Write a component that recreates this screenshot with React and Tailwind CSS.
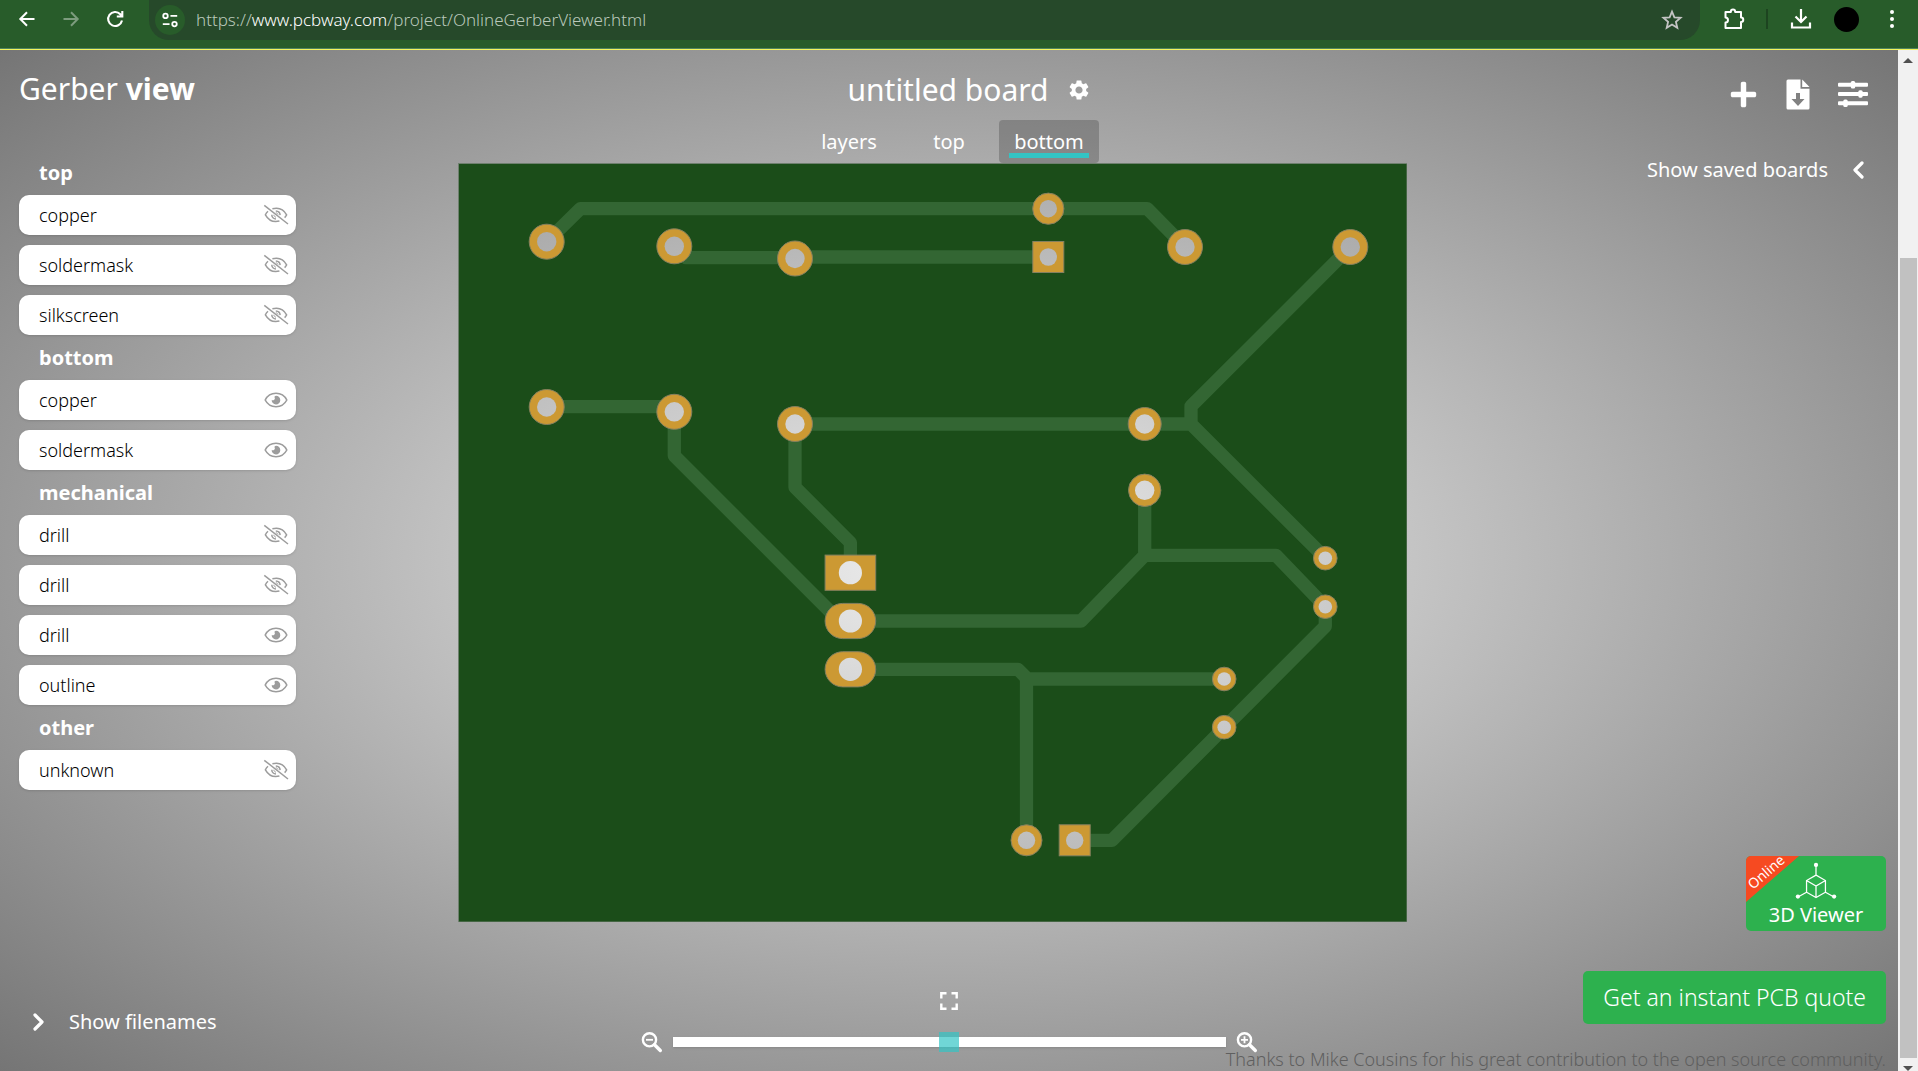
import React, { useState } from "react";
import { MdSettings } from "react-icons/md";
import { FaPlus } from "react-icons/fa";

const LAYER_GROUPS = [
  { title: "top", layers: [["copper", false], ["soldermask", false], ["silkscreen", false]] },
  { title: "bottom", layers: [["copper", true], ["soldermask", true]] },
  { title: "mechanical", layers: [["drill", false], ["drill", false], ["drill", true], ["outline", true]] },
  { title: "other", layers: [["unknown", false]] },
];

function EyeIcon() {
  return (
    <svg viewBox="0 0 26 22" className="h-[22px] w-[26px]" fill="none" aria-hidden="true">
      <path d="M2.2 11C4.6 6.3 8.6 4.3 13 4.3S21.400 6.300 23.800 11C21.400 15.700 17.400 17.700 13 17.700S4.600 15.700 2.200 11Z" stroke="#9c9c9c" strokeWidth="1.600" />
      <path d="M13 6.800a4.300 4.300 0 1 1-4.300 4.100c.7.600 1.700.6 2.300.1 1-.7 1.100-1.700.5-2.700-.2-.5.700-1.500 1.500-1.500Z" fill="#9c9c9c" />
    </svg>
  );
}

function EyeOffIcon() {
  return (
    <svg viewBox="0 0 26 22" className="h-[22px] w-[26px]" fill="none" stroke="#9c9c9c" aria-hidden="true">
      <path d="M1.300 1.300 25 20" strokeWidth="1.500" />
      <path d="M9.400 4.700C15.500 3.200 20.700 5.300 23.600 10.800c-.5 1-1.200 2-2 2.800" strokeWidth="1.500" />
      <path d="M5 7.300c-1.100 1-2 2.200-2.600 3.500 3.200 5.700 8 7.700 14 6.300" strokeWidth="1.500" />
      <path d="M12.800 6.900c2.300.1 4.200 1.900 4.300 4.200M8.800 10.800c0 2.300 1.900 4.200 4.200 4.300" strokeWidth="1.500" />
      <path d="M12.800 8.700c1 .1 1.900.9 2.200 1.900M10.800 10.800c.1 1.100 1 2.200 2.200 2.400" strokeWidth="1" />
    </svg>
  );
}

function Chevron({ className }) {
  return (
    <svg viewBox="0 0 12 20" className={className} fill="none" stroke="white" strokeWidth="3.200" strokeLinecap="round" strokeLinejoin="round" aria-hidden="true">
      <path d="M10 3 3 10l7 7" />
    </svg>
  );
}

function MagnifierIcon({ plus }) {
  return (
    <svg viewBox="0 0 22 22" className="size-[22px]" fill="none" stroke="white" aria-hidden="true">
      <circle cx="8.500" cy="8.800" r="6.600" strokeWidth="2.400" />
      <path d="M13.500 13.800 19.300 19.500" strokeWidth="3.400" strokeLinecap="round" />
      <path d={plus ? "M5 8.800h7M8.500 5.300v7" : "M5 8.800h7"} strokeWidth="1.800" />
    </svg>
  );
}

function AddressBar() {
  return (
    <header className="flex h-12 items-start bg-[#285c2a] text-white">
      <nav className="flex h-[38px] w-[149px] shrink-0 items-center gap-5 pl-[15px]" aria-label="Browser">
        <button aria-label="Back" className="flex size-6 items-center justify-center">
          <svg viewBox="0 0 20 20" className="size-5" fill="none" stroke="currentColor" strokeWidth="2"><path d="M17.500 10H4M10 3.300 3.300 10l6.700 6.700" /></svg>
        </button>
        <button aria-label="Forward" className="flex size-6 items-center justify-center text-[#7d9c7e]">
          <svg viewBox="0 0 20 20" className="size-5" fill="none" stroke="currentColor" strokeWidth="2"><path d="M2.500 10H16M10 3.300l6.700 6.700-6.700 6.700" /></svg>
        </button>
        <button aria-label="Reload" className="flex size-6 items-center justify-center">
          <svg viewBox="0 0 20 20" className="size-5" fill="none" stroke="currentColor" strokeWidth="2.100"><path d="M17 11.500A7 7 0 1 1 15.300 5.200L17 7M17.300 2v5.500h-5.500" /></svg>
        </button>
      </nav>
      <div className="flex h-10 min-w-0 flex-1 items-center rounded-b-[20px] bg-[#26492a] pr-4 pl-[6px]">
        <button aria-label="Site information" className="flex size-[30px] shrink-0 items-center justify-center rounded-full bg-[#285c2a]">
          <svg viewBox="0 0 20 20" className="size-[18px]" fill="none" stroke="currentColor" strokeWidth="2"><circle cx="5" cy="5.500" r="2.500" /><path d="M10.500 5.500H18M2 14.500h7.500" /><circle cx="15" cy="14.500" r="2.500" /></svg>
        </button>
        <a href="https://www.pcbway.com/project/OnlineGerberViewer.html" className="ml-[11px] flex-1 truncate text-[17px] leading-6 font-light text-[#b9c8ba]">
          https://<span className="font-[350] text-white">www.pcbway.com</span>/project/OnlineGerberViewer.html
        </a>
        <button aria-label="Bookmark this page" className="text-[#c4c4c4]">
          <svg viewBox="0 0 24 24" className="size-6" fill="none" stroke="currentColor" strokeWidth="1.800"><path d="m12 3.600 2.400 5.700 6.200.5-4.700 4 1.400 6-5.300-3.200-5.300 3.200 1.400-6-4.700-4 6.200-.5Z" /></svg>
        </button>
      </div>
      <div className="flex h-[38px] shrink-0 items-center pr-5 pl-[22px]">
        <button aria-label="Extensions">
          <svg viewBox="0 0 24 24" className="size-6" fill="none" stroke="currentColor" strokeWidth="2" strokeLinejoin="round"><path d="M3.500 5h5.300c0-3.200 4.400-3.200 4.400 0H19v5.500c3 0 3 4.500 0 4.500v6H3.500v-5.500c3.300 0 3.300-5 0-5Z" /></svg>
        </button>
        <span className="ml-5 h-5 w-[2px] bg-[#1d4420]" />
        <button aria-label="Downloads" className="ml-[21px]">
          <svg viewBox="0 0 24 24" className="size-6" fill="none" stroke="currentColor" strokeWidth="2.200"><path d="M12 2v12.500M6.500 9.500l5.500 5.500 5.500-5.500M3 15.500v5h18v-5" /></svg>
        </button>
        <button aria-label="Profile" className="ml-[21px] size-[25px] rounded-full bg-black" />
        <button aria-label="Browser menu" className="ml-[27px]">
          <svg viewBox="0 0 12 20" className="h-5 w-3" fill="currentColor"><circle cx="6" cy="3" r="2" /><circle cx="6" cy="10" r="2" /><circle cx="6" cy="17" r="2" /></svg>
        </button>
      </div>
    </header>
  );
}

const TRACES = [
  "M546.700 241.700 580.300 208.700H1147.300L1185 247",
  "M674.300 246.300 686 257.700H795M795 257H1048",
  "M546.700 406.700H670L674.300 411.800V455.700L839.600 621H850.400",
  "M850.400 572.700V542.600L795 487.300V424H1191V406.300L1350.300 247M1191 424 1325.300 558",
  "M1144.700 490.300V555.300H1276L1325.300 606.700V626.300L1112 840.300H1074.700M1144.700 555.300 1081 621H850.400",
  "M850.400 669.300H1018L1027.500 679H1224M1026.500 679V840.300",
];

const ROUND_PADS = [
  [546.7, 241.7, 17.5, 9.7], [674.3, 246.3, 17.5, 9.7], [795, 258.5, 17.5, 9.7], [1048.3, 208.7, 15.6, 8.7],
  [1185, 247, 17.5, 9.7], [1350.3, 247, 17.5, 9.7], [546.7, 407, 17.5, 9.7], [674.3, 411.8, 17.5, 9.7],
  [795, 424, 17.5, 9.7], [1144.7, 424, 16.5, 9.7], [1144.7, 490.3, 16.2, 9.7], [1325.3, 558.2, 11.8, 6.8],
  [1325.3, 606.7, 11.8, 6.8], [1224.2, 679, 11.8, 6.8], [1224.2, 727.2, 11.8, 6.8], [1026.5, 840.3, 15.5, 8.7],
];

const BOX_PADS = [
  [1048.3, 257, 31, 31, 0, 8.7], [1074.7, 840.3, 31, 31, 0, 8.7], [850.4, 572.7, 50.600, 35.200, 0, 11.6],
  [850.4, 621, 50.600, 35.200, 17.600, 11.6], [850.4, 669.3, 50.600, 35.200, 17.600, 11.6],
];

function Board() {
  return (
    <svg viewBox="458 163 949 759" className="block h-auto w-1/2 shrink-0" role="img" aria-label="Bottom side of the board">
      <defs>
        <mask id="drills" maskUnits="userSpaceOnUse" x="458" y="163" width="949" height="759">
          <rect x="458" y="163" width="949" height="759" fill="white" />
          {ROUND_PADS.map(([x, y, , h], i) => <circle key={i} cx={x} cy={y} r={h} fill="black" />)}
          {BOX_PADS.map(([x, y, , , , h], i) => <circle key={i} cx={x} cy={y} r={h} fill="black" />)}
        </mask>
      </defs>
      <g mask="url(#drills)">
        <rect x="458" y="163" width="949" height="759" fill="#6f806f" />
        <rect x="459" y="164" width="947.500" height="757.500" fill="#1b4d19" />
        <g fill="none" stroke="#336633" strokeWidth="13.300" strokeLinecap="round" strokeLinejoin="round">
          {TRACES.map((d) => <path key={d} d={d} />)}
        </g>
        <g fill="#cc9933" stroke="#85805f" strokeWidth="1">
          {ROUND_PADS.map(([x, y, r], i) => <circle key={i} cx={x} cy={y} r={r} />)}
          {BOX_PADS.map(([x, y, w, h, r], i) => <rect key={i} x={x - w / 2} y={y - h / 2} width={w} height={h} rx={r} />)}
        </g>
      </g>
    </svg>
  );
}

function Toolbar({ view, onView }) {
  return (
    <div className="grid grid-cols-[1fr_auto_1fr] items-start">
      <h1 className="pt-[19px] pl-[19px] text-3xl leading-10 font-normal">Gerber <b>view</b></h1>
      <div className="flex flex-col items-center">
        <div className="flex h-[70px] items-center gap-[18px] pt-[10px] pl-10">
          <h2 className="text-3xl leading-10">untitled board</h2>
          <button aria-label="Board settings"><MdSettings className="size-6" /></button>
        </div>
        <nav className="flex" aria-label="Board view">
          {["layers", "top", "bottom"].map((name) => (
            <button
              key={name}
              onClick={() => onView(name)}
              className={name === view
                ? "flex h-[43px] w-[100px] flex-col items-center rounded-[4px] bg-black/20 px-[10px] pt-[10px] text-xl leading-[23px]"
                : "flex h-[43px] w-[100px] flex-col items-center px-[10px] pt-[10px] text-xl leading-[23px]"}
            >
              {name}
              {name === view && <span className="h-[5px] w-full bg-[#33c4c4]" />}
            </button>
          ))}
        </nav>
      </div>
      <div className="flex h-[88px] items-center justify-end gap-7 pr-[30px]">
        <button aria-label="Add board"><FaPlus className="size-[29px]" /></button>
        <button aria-label="Download files">
          <svg viewBox="0 0 24 31" className="h-[31px] w-6" fill="white">
            <path fillRule="evenodd" d="M2 .5h12.500v9.300H23.500V29a1.500 1.500 0 0 1-1.500 1.500H2A1.500 1.500 0 0 1 .5 29V2A1.500 1.500 0 0 1 2 .5ZM10 14v6H5.500l6.500 7 6.500-7H14v-6Z" />
            <path d="M16.200.5 23.500 8h-7.300Z" />
          </svg>
        </button>
        <button aria-label="Render settings">
          <svg viewBox="0 0 30 28" className="h-7 w-[30px]" fill="white">
            <rect y="2.700" width="30" height="4" rx="1" /><rect y="12" width="30" height="4" rx="1" /><rect y="21.300" width="30" height="4" rx="1" />
            <rect x="12.800" y="1" width="4.400" height="7.500" rx="1.600" /><rect x="20.300" y="10.200" width="4.400" height="7.500" rx="1.600" /><rect x="5.300" y="19.500" width="4.400" height="7.500" rx="1.600" />
          </svg>
        </button>
      </div>
    </div>
  );
}

function LayerList() {
  const [groups, setGroups] = useState(LAYER_GROUPS);
  const toggle = (gi, li) =>
    setGroups(groups.map((g, i) => i !== gi ? g : { ...g, layers: g.layers.map(([n, on], j) => [n, j === li ? !on : on]) }));
  return (
    <aside className="flex w-[458px] shrink-0 flex-col gap-[13px] pl-[19px]">
      {groups.map((group, gi) => (
        <section key={group.title}>
          <h3 className="h-8 pl-5 text-xl leading-5 font-bold">{group.title}</h3>
          <ul className="flex flex-col gap-[10px]">
            {group.layers.map(([name, visible], li) => (
              <li key={li} className="flex h-10 w-[277px] items-center justify-between rounded-[10px] bg-white pr-[7px] pl-5 text-lg font-[350] text-black shadow-sm">
                <span>{name}</span>
                <button aria-label={`Toggle ${group.title} ${name}`} onClick={() => toggle(gi, li)}>
                  {visible ? <EyeIcon /> : <EyeOffIcon />}
                </button>
              </li>
            ))}
          </ul>
        </section>
      ))}
    </aside>
  );
}

function SidePanel() {
  return (
    <div className="flex min-w-0 flex-1 flex-col items-end justify-between">
      <button className="flex h-[14px] items-center gap-6 pr-[34px] text-xl leading-[14px]">
        Show saved boards
        <Chevron className="h-5 w-3" />
      </button>
      <a href="#viewer-3d" className="relative mr-3 flex h-[75px] w-[140px] flex-col items-center rounded-[5px] bg-[#2db14e] pt-[6px] text-xl leading-8">
        <svg viewBox="0 0 42 38" className="h-[38px] w-[42px]" fill="none" stroke="white" strokeWidth="1.300" aria-hidden="true">
          <path d="M21 4v9.500l9.700 5.500v12L21 36.500 11.300 31V19L21 13.500M11.300 19 21 24.700 30.700 19M21 24.700v11.800M11.300 31 2.500 36M30.700 31l8.800 5" />
          <g fill="white" stroke="none"><circle cx="21" cy="3" r="2.200" /><circle cx="2.400" cy="35.500" r="2.200" /><circle cx="39.600" cy="35.500" r="2.200" /></g>
        </svg>
        3D Viewer
        <span className="absolute top-0 left-0 h-[46px] w-[53px] rounded-tl-[5px] bg-[#f64a21] [clip-path:polygon(0_0,100%_0,0_100%)]" />
        <span className="absolute top-1 left-[-6px] w-[52px] -rotate-[41deg] text-center text-sm leading-6">Online</span>
      </a>
    </div>
  );
}

function Footer() {
  const [zoom, setZoom] = useState(50);
  return (
    <footer className="flex flex-col">
      <div className="grid grid-cols-[1fr_auto_1fr] items-start">
        <button className="mt-[77px] flex items-center gap-6 pl-[33px] text-xl leading-7">
          <Chevron className="h-5 w-3 rotate-180" />
          Show filenames
        </button>
        <div className="flex flex-col items-center pt-[61px]">
          <button aria-label="Fit to window">
            <svg viewBox="0 0 18 18" className="size-[18px]" fill="none" stroke="white" strokeWidth="2.400"><path d="M1.300 6.500V1.300h5.200M11.500 1.300h5.200v5.200M16.700 11.500v5.200h-5.200M6.500 16.700H1.300v-5.200" /></svg>
          </button>
          <div className="mt-[21px] flex items-center gap-[10px]">
            <button aria-label="Zoom out"><MagnifierIcon /></button>
            <input
              type="range"
              min="0"
              max="100"
              value={zoom}
              onChange={(e) => setZoom(Number(e.target.value))}
              aria-label="Zoom"
              className="h-[10px] w-[553px] appearance-none bg-white shadow-sm [&::-webkit-slider-thumb]:size-5 [&::-webkit-slider-thumb]:appearance-none [&::-webkit-slider-thumb]:bg-[#33c4c4]/70"
            />
            <button aria-label="Zoom in"><MagnifierIcon plus /></button>
          </div>
        </div>
        <a href="#quote" className="mt-10 mr-3 flex h-[53px] items-center justify-self-end rounded-[5px] bg-[#2db14e] px-5 text-[23px] font-[350]">
          Get an instant PCB quote
        </a>
      </div>
      <p className="-mt-[5px] self-end pr-3 text-lg leading-[22px] font-[350] text-[#5f5f5f]">
        Thanks to Mike Cousins for his great contribution to the open source community.
      </p>
    </footer>
  );
}

function Scrollbar() {
  return (
    <div className="flex w-5 shrink-0 flex-col items-center bg-[#f1f1f1]" aria-hidden="true">
      <svg viewBox="0 0 10 5" className="mt-2 h-[5px] w-[10px]" fill="#505050"><path d="M0 5 5 0l5 5Z" /></svg>
      <div className="mt-[195px] w-[17px] flex-1 bg-[#c1c1c1]" />
      <svg viewBox="0 0 10 5" className="mt-2 h-[5px] w-[10px]" fill="#505050"><path d="M0 0h10L5 5Z" /></svg>
    </div>
  );
}

export default function App() {
  const [view, setView] = useState("bottom");
  return (
    <div className="flex min-h-screen flex-col font-['Noto_Sans','Open_Sans',sans-serif]">
      <AddressBar />
      <div className="h-px bg-[#4f8560]" />
      <div className="h-px bg-[#f3f55c]" />
      <div className="flex flex-1">
        <main className="flex min-w-0 flex-1 flex-col bg-[radial-gradient(#eeeeee,#757575)] text-white">
          <Toolbar view={view} onView={setView} />
          <div className="flex min-h-[768px] items-start">
            <LayerList />
            <Board />
            <div className="flex flex-1 self-stretch"><SidePanel /></div>
          </div>
          <Footer />
        </main>
        <Scrollbar />
      </div>
    </div>
  );
}
